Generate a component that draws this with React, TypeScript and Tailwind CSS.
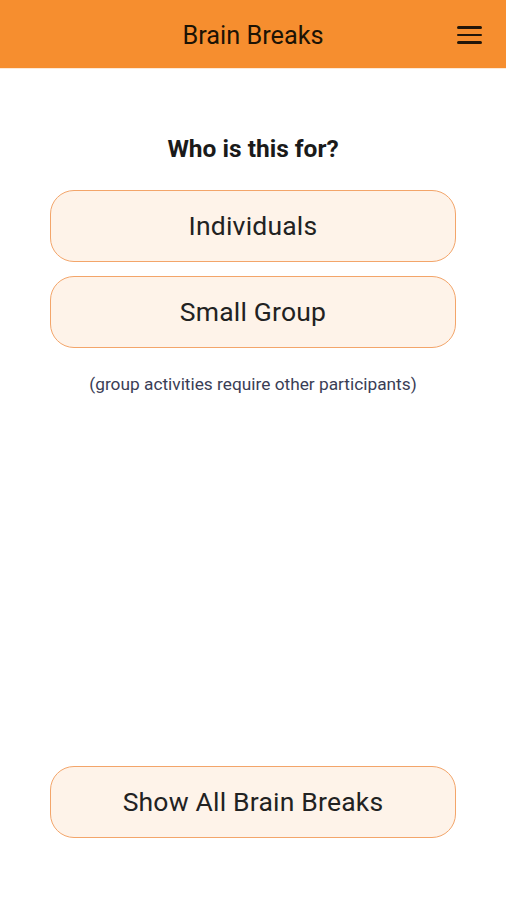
const choices = ['Individuals', 'Small Group'];

function ChoiceButton({ label }: { label: string }) {
  return (
    <button className="w-full h-[72px] rounded-[24px] border border-[#f3a56a] bg-[#fef3e9] text-[26.5px] text-[#222] tracking-[0.2px]">
      {label}
    </button>
  );
}

export default function App() {
  return (
    <div className="min-h-[900px] bg-white flex flex-col font-['Roboto',sans-serif]">
      <header className="h-[69px] bg-[#f68e2f] relative flex items-center justify-center border-b border-[#fde9d6]">
        <h1 className="text-[25.3px] text-[#1c1305] pt-[4px]">Brain Breaks</h1>
        <button className="absolute right-[24px] top-[26px] w-[25px] flex flex-col gap-[5px]" aria-label="Menu">
          <span className="block h-[2.5px] bg-[#22160a] rounded" />
          <span className="block h-[2.5px] bg-[#22160a] rounded" />
          <span className="block h-[2.5px] bg-[#22160a] rounded" />
        </button>
      </header>

      <main className="flex-1 flex flex-col px-[50px] pt-[62px] pb-[62px]">
        <h2 className="text-center text-[24.5px] font-bold text-[#1a1a1a] mb-[22px]">Who is this for?</h2>
        <div className="flex flex-col gap-[14px]">
          {choices.map((c) => (
            <ChoiceButton key={c} label={c} />
          ))}
        </div>
        <p className="text-center text-[17.3px] text-[#3a3d55] mt-[24px]">(group activities require other participants)</p>

        <div className="mt-auto">
          <ChoiceButton label="Show All Brain Breaks" />
        </div>
      </main>
    </div>
  );
}
